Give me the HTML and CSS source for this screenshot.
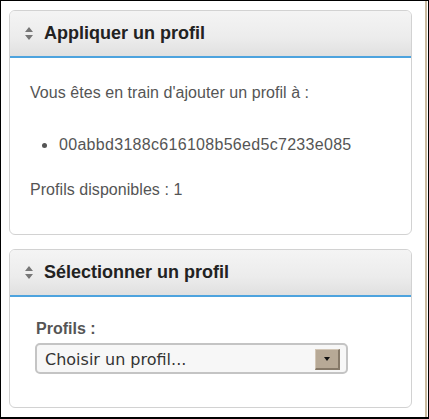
FILE: index.html
```html
<!DOCTYPE html>
<html lang="fr">
<head>
<meta charset="utf-8">
<title>Profils</title>
<link rel="stylesheet" href="styles.css">
</head>
<body>
<div class="frame">
  <div class="content">
    <section class="panel panel-apply">
      <header class="panel-head">
        <svg class="sort-icon" width="8" height="14" viewBox="0 0 8 14"><path d="M4 0 L8 5 L0 5 Z M0 8 L8 8 L4 13 Z" fill="#777"/></svg>
        <h2 class="panel-title">Appliquer un profil</h2>
      </header>
      <div class="panel-body body-apply">
        <p class="line">Vous êtes en train d'ajouter un profil à :</p>
        <ul class="targets">
          <li class="target"><span class="bullet"></span><span class="hash">00abbd3188c616108b56ed5c7233e085</span></li>
        </ul>
        <p class="line">Profils disponibles : 1</p>
      </div>
    </section>
    <section class="panel panel-select">
      <header class="panel-head">
        <svg class="sort-icon" width="8" height="14" viewBox="0 0 8 14"><path d="M4 0 L8 5 L0 5 Z M0 8 L8 8 L4 13 Z" fill="#777"/></svg>
        <h2 class="panel-title">Sélectionner un profil</h2>
      </header>
      <div class="panel-body body-select">
        <label class="field-label">Profils :</label>
        <div class="select-box">
          <span class="select-text">Choisir un profil...</span>
          <span class="select-btn"><span class="arrow"></span></span>
        </div>
      </div>
    </section>
  </div>
</div>
</body>
</html>
```

FILE: styles.css
```css
* { box-sizing: border-box; }
html, body { margin: 0; padding: 0; background: #ffffff; }
body { font-family: "Liberation Sans", Arial, sans-serif; }

.frame {
  width: 429px;
  height: 419px;
  border-top: 1px solid #000;
  border-left: 1px solid #000;
  border-right: 1px solid #000;
  border-bottom: 2px solid #000;
  display: flex;
}

.content {
  width: 426px;
  height: 100%;
  padding: 9px 12px 0 8px;
  border-right: 2px solid #c9ba9f;
  display: flex;
  flex-direction: column;
  gap: 14px;
}

.panel {
  width: 403px;
  border: 1px solid #d2d2d2;
  border-radius: 6px;
  background: #fff;
  display: flex;
  flex-direction: column;
  overflow: hidden;
}
.panel-apply { height: 225px; }
.panel-select { height: 159px; }

.panel-head {
  height: 47px;
  flex: none;
  display: flex;
  align-items: center;
  padding-left: 15px;
  gap: 11px;
  background: linear-gradient(#f4f4f4, #ececec 60%, #e0e0e0);
  border-bottom: 2px solid #4da3de;
}
.sort-icon { flex: none; margin-top: 1px; }
.panel-title {
  margin: 0;
  font-size: 18px;
  line-height: 21px;
  font-weight: bold;
  color: #222;
}

.panel-body { flex: 1; color: #555; font-size: 16px; line-height: 18px; }
.body-apply { padding: 26px 0 0 20px; }
.line { margin: 0; letter-spacing: 0.05px; }
.targets { list-style: none; margin: 34px 0 27px; padding: 0 0 0 12px; }
.target { display: flex; align-items: center; gap: 12px; }
.bullet { width: 5px; height: 5px; border-radius: 50%; background: #555; flex: none; }
.hash { letter-spacing: 0.3px; }

.body-select { padding: 23px 0 0 25px; }
.field-label { display: block; font-weight: bold; color: #555; margin-left: 1px; }
.select-box {
  margin-top: 5px;
  width: 313px;
  height: 31px;
  border: 2px solid #c4c4c4;
  border-radius: 5px;
  background: #f7f7f7;
  display: flex;
  align-items: center;
  justify-content: space-between;
  padding: 0 6px 0 8px;
}
.select-text { font-family: "DejaVu Sans", sans-serif; font-size: 16px; color: #333; line-height: 20px; margin-top: 2px; }
.select-btn {
  width: 25px;
  height: 21px;
  margin-top: 2px;
  background: #b7a996;
  border-top: 1px solid #d2c6b6;
  border-left: 1px solid #d2c6b6;
  border-right: 2px solid #857867;
  border-bottom: 2px solid #857867;
  display: flex;
  align-items: center;
  justify-content: center;
}
.arrow {
  width: 0; height: 0;
  border-left: 3px solid transparent;
  border-right: 3px solid transparent;
  border-top: 4px solid #111;
}
```
